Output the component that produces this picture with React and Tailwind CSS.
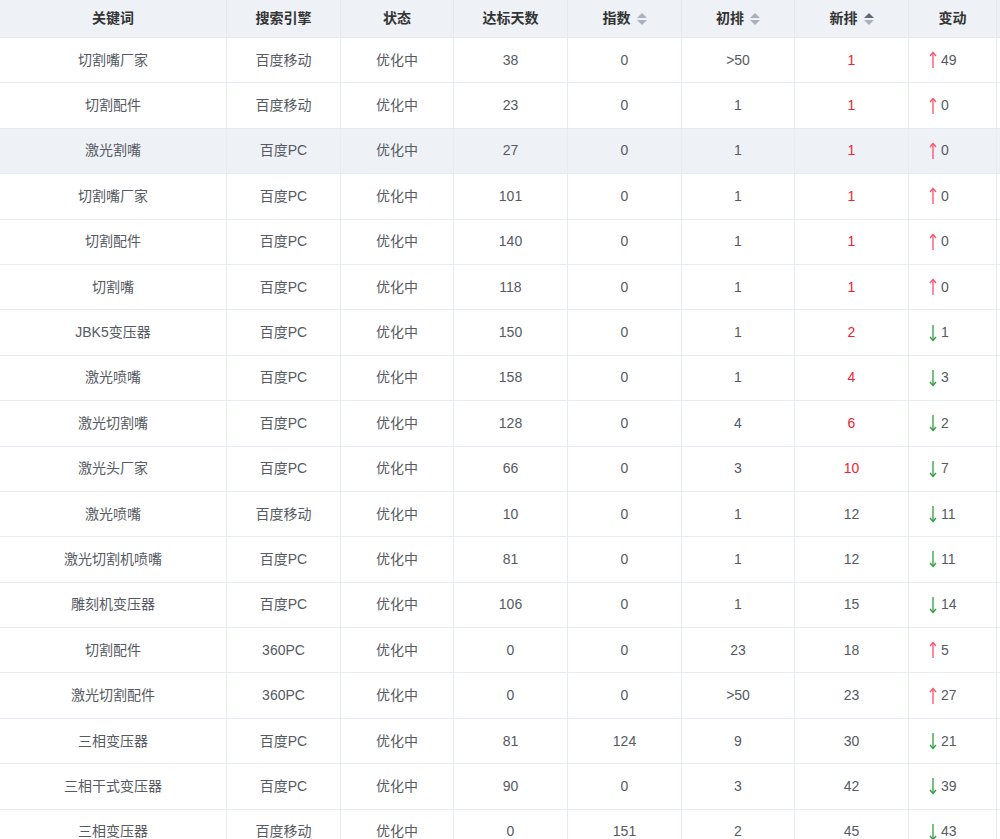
const rows = [
["切割嘴厂家","百度移动","38","0",">50","1","u","49"],
["切割配件","百度移动","23","0","1","1","u","0"],
["激光割嘴","百度PC","27","0","1","1","u","0"],
["切割嘴厂家","百度PC","101","0","1","1","u","0"],
["切割配件","百度PC","140","0","1","1","u","0"],
["切割嘴","百度PC","118","0","1","1","u","0"],
["JBK5变压器","百度PC","150","0","1","2","d","1"],
["激光喷嘴","百度PC","158","0","1","4","d","3"],
["激光切割嘴","百度PC","128","0","4","6","d","2"],
["激光头厂家","百度PC","66","0","3","10","d","7"],
["激光喷嘴","百度移动","10","0","1","12","d","11"],
["激光切割机喷嘴","百度PC","81","0","1","12","d","11"],
["雕刻机变压器","百度PC","106","0","1","15","d","14"],
["切割配件","360PC","0","0","23","18","u","5"],
["激光切割配件","360PC","0","0",">50","23","u","27"],
["三相变压器","百度PC","81","124","9","30","d","21"],
["三相干式变压器","百度PC","90","0","3","42","d","39"],
["三相变压器","百度移动","0","151","2","45","d","43"],
];
const cols = "grid grid-cols-[227px_114px_113px_114px_114px_113px_114px_88px]";
const Sort = ({active}) => (
  <span className="inline-flex flex-col ml-[6px] gap-[2px]">
    <span className={`w-0 h-0 border-x-[5px] border-x-transparent border-b-[5px] ${active ? "border-b-[#606a7c]" : "border-b-[#a8b0be]"}`}></span>
    <span className="w-0 h-0 border-x-[5px] border-x-transparent border-t-[5px] border-t-[#a8b0be]"></span>
  </span>
);
const Arrow = ({up}) => (
  <svg width="8" height="18" viewBox="0 0 8 18" className="mr-[4px]" fill="none" stroke={up ? "#ff4d6a" : "#2e9e3e"} strokeWidth="1.3">
    {up ? (<><path d="M4 1.5V17"/><path d="M1 5L4 1.5L7 5"/></>) : (<><path d="M4 1V16.5"/><path d="M1 13L4 16.5L7 13"/></>)}
  </svg>
);
export default function App() {
  const heads = ["关键词","搜索引擎","状态","达标天数","指数","初排","新排","变动"];
  return (
    <div className="w-[1000px] h-[839px] overflow-hidden bg-white text-[14px] text-[#555a63]" style={{fontFamily:'"Liberation Sans","Noto Sans CJK SC",sans-serif'}}>
      <div className={`${cols} h-[38px] bg-[#eef1f6] border-b border-[#e4e8f0] font-bold text-[#333]`}>
        {heads.map((h,i)=>(
          <div key={i} className="flex items-center justify-center border-r border-[#e4e8f0]">
            {h}{i>=4 && i<=6 && <Sort active={i===6}/>}
          </div>
        ))}
      </div>
      {rows.map((r,ri)=>(
        <div key={ri} className={`${cols} h-[45.4px] border-b border-[#e6ebf5] ${ri===2?"bg-[#eef1f6]":""}`}>
          {[r[0],r[1],"优化中",r[2],r[3],r[4]].map((c,ci)=>(
            <div key={ci} className="flex items-center justify-center border-r border-[#e6ebf5]">{c}</div>
          ))}
          <div className={`flex items-center justify-center border-r border-[#e6ebf5] ${ri<10?"text-[#f5222d]":""}`}>{r[5]}</div>
          <div className="flex items-center pl-[20px] border-r border-[#e6ebf5]">
            <Arrow up={r[6]==="u"}/>{r[7]}
          </div>
        </div>
      ))}
    </div>
  );
}
